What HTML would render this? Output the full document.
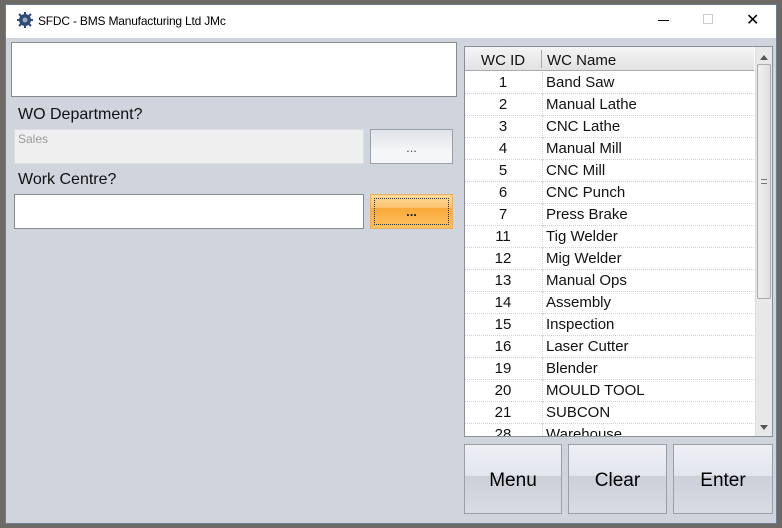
<!DOCTYPE html>
<html><head><style>
*{margin:0;padding:0;box-sizing:border-box}
body{width:782px;height:528px;background:#6d6a66;position:relative;overflow:hidden;font-family:"Liberation Sans",sans-serif}
.win{position:absolute;left:5px;top:4px;width:772px;height:520px;border:1px solid #6b7d95;background:#d0d4dc}
.title{position:absolute;left:0;top:0;width:770px;height:33px;background:#fff;font-size:12px;color:#000}
.a{position:absolute}
.tb{position:absolute;background:#fff;border:1px solid #8a8a8a}
.btn{position:absolute;border:1px solid #9a9ea6;background:linear-gradient(#eef0f5,#e2e5ec 45%,#ccd0d8 46%,#d8dbe2);text-align:center}
.lbl{position:absolute;font-size:16px;color:#111}
.grid{position:absolute;left:464px;top:46px;width:309px;height:391px;border:1px solid #8a8e96;background:#fff;overflow:hidden}
.row{position:absolute;left:0;width:289px;height:22px;border-bottom:1px dotted #d0d0d0;font-size:15px;color:#111}
.row .id{position:absolute;left:0;width:76px;text-align:center;top:2px}
.row .nm{position:absolute;left:81px;top:2px}
.row .dv{position:absolute;left:77px;top:0;height:22px;border-left:1px dotted #d0d0d0}
</style></head><body>
<div class="win">
<div class="title">
<svg class="a" style="left:11px;top:7px" width="16" height="16" viewBox="0 0 16 16"><circle cx="8" cy="8" r="6" fill="#2d4a78"/><circle cx="8" cy="8" r="2.5" fill="#9ab"/><path d="M8 0v4M8 12v4M0 8h4M12 8h4M2 2l3 3M11 11l3 3M2 14l3-3M11 5l3-3" stroke="#2d4a78" stroke-width="2"/></svg>
<div class="a" style="left:32px;top:9px;letter-spacing:-0.2px">SFDC - BMS Manufacturing Ltd JMc</div>
<div class="a" style="left:652px;top:15px;width:11px;height:1px;background:#000"></div>
<div class="a" style="left:697px;top:9px;width:10px;height:10px;border:1px solid #ccc"></div>
<div class="a" style="left:740px;top:5px;font-size:16px">✕</div>
</div>
</div>
<div class="tb" style="left:11px;top:42px;width:446px;height:55px"></div>
<div class="lbl" style="left:18px;top:106px">WO Department?</div>
<div class="a" style="left:14px;top:129px;width:350px;height:35px;background:#efefef;border:1px solid #ddd;font-size:12px;color:#999;padding:2px 3px">Sales</div>
<div class="btn" style="left:370px;top:129px;width:83px;height:35px;background:linear-gradient(#dfe2e8,#f6f7f9 70%,#f4f5f7);font-size:13px;color:#555;padding-top:10px">...</div>
<div class="lbl" style="left:18px;top:171px">Work Centre?</div>
<div class="tb" style="left:14px;top:194px;width:350px;height:35px"></div>
<div class="btn" style="left:370px;top:194px;width:83px;height:35px;border-color:#e8b060;background:linear-gradient(#fdd898,#fcc470 38%,#fba93a 40%,#fdc060);font-size:13px;font-weight:bold;color:#222;padding-top:9px"><div style="position:absolute;left:3px;top:3px;right:3px;bottom:3px;border:1px dotted #333"></div>...</div>
<div class="grid">
<div class="a" style="left:0;top:0;width:289px;height:24px;background:linear-gradient(#f4f4f4,#e2e2e2);border-bottom:1px solid #aaa;font-size:15px;color:#111">
<div class="a" style="left:0;width:76px;text-align:center;top:5px">WC ID</div>
<div class="a" style="left:76px;top:3px;height:18px;border-left:1px solid #aaa"></div>
<div class="a" style="left:82px;top:5px">WC Name</div></div>
<div id="rows"></div>
<div class="a" style="left:290px;top:0;width:17px;height:389px;background:#e8e8e8;border-left:1px solid #ddd">
<div class="a" style="left:4px;top:8px;width:0;height:0;border:4px solid transparent;border-bottom:5px solid #555;border-top:0"></div>
<div class="a" style="left:1px;top:17px;width:14px;height:235px;background:linear-gradient(90deg,#f0f0f0,#e0e0e0);border:1px solid #aaa;border-radius:2px"></div>
<div class="a" style="left:5px;top:132px;width:6px;height:5px;border-top:1px solid #777;border-bottom:1px solid #777"></div>
<div class="a" style="left:4px;top:378px;width:0;height:0;border:4px solid transparent;border-top:5px solid #555;border-bottom:0"></div>
</div>
</div>
<div class="btn" style="left:464px;top:444px;width:98px;height:70px;font-size:19px;padding-top:25px">Menu</div>
<div class="btn" style="left:568px;top:444px;width:99px;height:70px;font-size:19px;padding-top:25px">Clear</div>
<div class="btn" style="left:673px;top:444px;width:100px;height:70px;font-size:19px;padding-top:25px">Enter</div>
<script>
var d=[[1,"Band Saw"],[2,"Manual Lathe"],[3,"CNC Lathe"],[4,"Manual Mill"],[5,"CNC Mill"],[6,"CNC Punch"],[7,"Press Brake"],[11,"Tig Welder"],[12,"Mig Welder"],[13,"Manual Ops"],[14,"Assembly"],[15,"Inspection"],[16,"Laser Cutter"],[19,"Blender"],[20,"MOULD TOOL"],[21,"SUBCON"],[28,"Warehouse"]];
var h="";d.forEach(function(r,i){h+='<div class="row" style="top:'+(25+i*22)+'px"><div class="id">'+r[0]+'</div><div class="dv"></div><div class="nm">'+r[1]+'</div></div>'});
document.getElementById("rows").innerHTML=h;
</script>
</body></html>
